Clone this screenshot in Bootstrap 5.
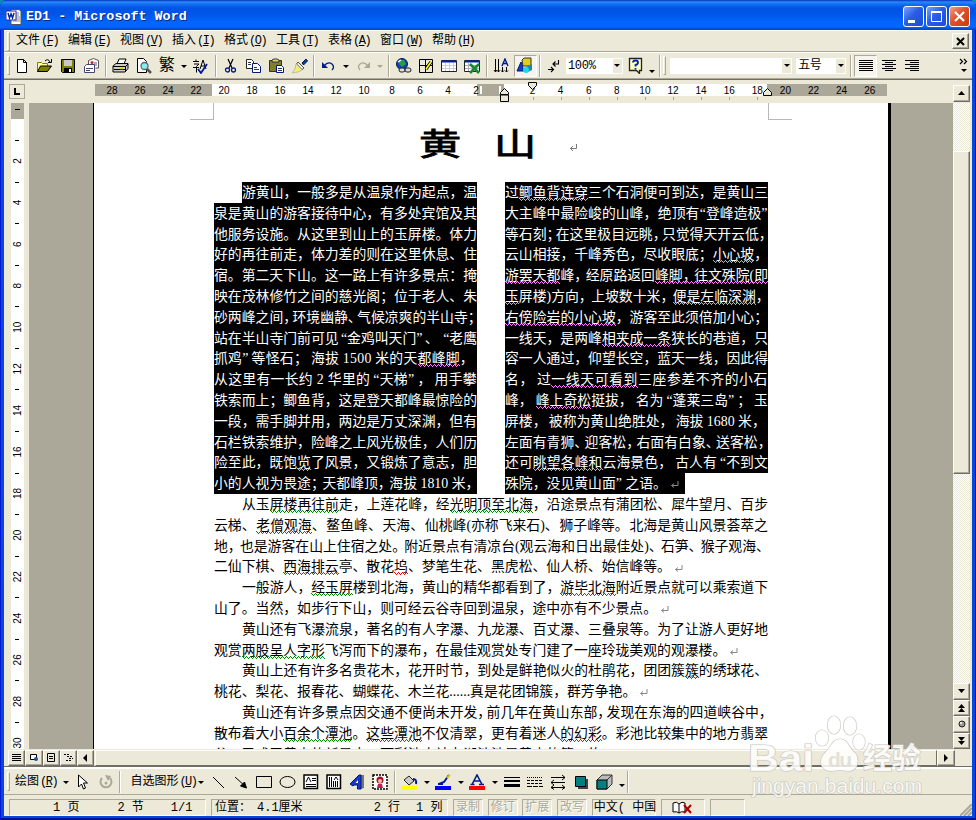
<!DOCTYPE html>
<html lang="zh-CN">
<head>
<meta charset="utf-8">
<meta name="viewport" content="width=device-width, initial-scale=1">
<title>ED1 - Microsoft Word</title>
<link href="https://cdn.jsdelivr.net/npm/bootstrap@5.3.0/dist/css/bootstrap.min.css" rel="stylesheet">
<style>
:root{--face:#ece9d8;--dark:#aca899}
html,body{width:976px;height:820px;overflow:hidden;margin:0}
body{font-family:"Liberation Mono","Noto Sans CJK SC",monospace;font-size:12px;line-height:1;color:#000;background:#0a8fb0}
svg{display:block;flex:none}
.win{width:976px;height:820px;border-radius:7px 7px 0 0;background:#0a46dc;padding:0 4px 4px 4px;box-shadow:inset 1px 0 #0019cf,inset -1px -2px #00138c}
.titlebar{height:30px;margin:0 -4px;padding:3px 6px 0 6px;border-radius:7px 7px 0 0;background:linear-gradient(#0831b8 0,#2a8afc 2px,#1470f4 4px,#0054e3 8px,#0055e8 14px,#0364fc 22px,#0066ff 27px,#003fc0 30px)}
.titlebar .cap{color:#fff;font-weight:700;font-size:13.4px;text-shadow:1px 1px #0a2a80;white-space:pre}
.cb{width:21px;height:21px;border:1px solid #fff;border-radius:3px;background:linear-gradient(135deg,#7ba4fa,#2a5ce8 45%,#1c4cd8)}
.cb.close-x{background:linear-gradient(135deg,#f0a088,#e0502a 45%,#c83a10)}
.client{height:786px;background:var(--face)}
.grip{width:3px;height:19px;border:1px solid;border-color:#fff var(--dark) var(--dark) #fff;flex:none}
.menubar{height:22px;border-top:1px solid #fff;border-bottom:1px solid var(--dark);padding:0 3px}
.menus{padding-left:6px}
.menubar .mi{width:52px;white-space:nowrap}
.mi u,.lbl u{text-underline-offset:1px}
.hk{letter-spacing:-1.5px;margin-left:1px}
.mi,.lbl{font-size:12px}
.lbl{white-space:nowrap;flex:none}
.lbl-a{width:50px;padding-left:5px}
.lbl-b{width:72px;padding-left:7px}
.bar{height:26px;border-top:1px solid #fff;padding-left:3px}
.ic{width:23.2px;flex:none;display:flex;align-items:center;justify-content:center}
.dd{width:11px;flex:none;display:flex;justify-content:center;padding-top:2px}
.dd::after,.cbo i::after{content:"";border:3px solid transparent;border-top:3px solid #000;border-bottom:0}
.dd.off::after{border-top-color:var(--dark)}
.vs{width:2px;height:22px;flex:none;background:linear-gradient(90deg,var(--dark) 50%,#fff 50%);margin:0 2px}
.pressed{height:22px;border:1px solid;border-color:var(--dark) #fff #fff var(--dark);background:#f6f4ec}
.cbo{height:16px;background:#fff;display:flex;align-items:center;justify-content:space-between;flex:none;font-size:12px;letter-spacing:-.3px;padding-left:2px}
.cbo i{width:9px;height:14px;margin-right:1px;background:var(--face);display:flex;align-items:center;justify-content:center}
.zoombox{width:57px}.fontbox{width:122px;margin-left:4px}.sizebox{width:50px;margin-left:4px}
.edge{border-top:1px solid var(--dark);border-bottom:1px solid #716f64}
.hrule{height:23px}
.rgap{height:5px}
.docrow{height:646px}
.desk{background:var(--dark)}
.desk-l{width:64px}.desk-r{width:62px}
.sheet-edge{width:3px;background:#000}
.sheet{width:795px;background:#fff;overflow:hidden;border-left:1px solid #000}
.crop-l,.crop-r{width:24px;height:17px;border:1px solid #b8b8b8;border-top:0}
.crop-l{margin-left:96px;border-left:0}.crop-r{margin-right:96px;border-right:0}
.headline{height:62px;padding:2px 0 0 325px;font:400 31px/40px "Noto Sans CJK SC",sans-serif;-webkit-text-stroke:.9px #000}
.headline span{display:block;width:42px;transform:scaleX(1.36);text-align:center;margin-right:33px}
.headline svg{margin-top:22px}
.copy{margin-left:120px;width:554px;font:13.85px/22.8px "Liberation Serif","Noto Sans CJK SC",serif;white-space:nowrap}
.pcol{width:263px}
.ln{height:20.8px;width:100%}
.ind{padding-left:28px}
.sel{background:#000;color:#fff}
.sel.first{margin-left:28px;width:235px}
.sel.lastsel{width:180px}
.ln u{text-decoration:none;padding-bottom:1px;background:0 100%/4px 3px repeat-x;background-image:url("data:image/svg+xml,%3Csvg xmlns='http://www.w3.org/2000/svg' width='4' height='3'%3E%3Cpath d='M0 0h1v1h-1zM1 1h1v1h-1zM2 2h1v1h-1zM3 1h1v1h-1z' fill='%23008800'/%3E%3C/svg%3E")}
.sel u{background-image:url("data:image/svg+xml,%3Csvg xmlns='http://www.w3.org/2000/svg' width='4' height='3'%3E%3Cpath d='M0 0h1v1h-1zM1 1h1v1h-1zM2 2h1v1h-1zM3 1h1v1h-1z' fill='%23ff80ff'/%3E%3C/svg%3E")}
.sel u.cy{background-image:url("data:image/svg+xml,%3Csvg xmlns='http://www.w3.org/2000/svg' width='4' height='3'%3E%3Cpath d='M0 0h1v1h-1zM1 1h1v1h-1zM2 2h1v1h-1zM3 1h1v1h-1z' fill='%2300ffff'/%3E%3C/svg%3E")}
.ln u.rd{background-image:url("data:image/svg+xml,%3Csvg xmlns='http://www.w3.org/2000/svg' width='4' height='3'%3E%3Cpath d='M0 0h1v1h-1zM1 1h1v1h-1zM2 2h1v1h-1zM3 1h1v1h-1z' fill='%23ff0000'/%3E%3C/svg%3E")}
.pm{display:inline-block;width:8px;height:7px;margin-left:4px}
.sb{width:17px;height:16.5px;flex:none;background:var(--face);border:1px solid;border-color:#fff #716f64 #716f64 #fff;box-shadow:inset -1px -1px var(--dark);display:flex;align-items:center;justify-content:center}
.track{width:17px;background:repeating-conic-gradient(#fff 0 25%,#ece9d8 0 50%) 0 0/2px 2px}
.thumb{height:323px;border:1px solid;border-color:#fff #716f64 #716f64 #fff;background:var(--face);box-shadow:inset -1px -1px var(--dark);margin-top:48px}
.hs{height:18px;border-bottom:1px solid #716f64}
.vb{width:17.3px;height:16px}
.hthumb{width:842px;height:16px;border:1px solid;border-color:#fff #716f64 #716f64 #fff;margin-left:1px}
.drawbar{height:28px;padding-left:3px;border-top:2px solid #fff;border-bottom:1px solid var(--dark)}
.status{height:21px;padding-left:5px;font-size:12px;white-space:pre}
.pn{height:17px;border:1px solid;border-color:var(--dark) #fff #fff var(--dark);flex:none;display:flex;align-items:center;margin-right:5px}
.pn.off{width:30px;color:var(--dark);text-shadow:1px 1px #fff;justify-content:center;margin-right:4.7px}
.p1{width:197px;padding-left:43px}.p2{width:237px;padding-left:3px}.p3{width:64px;padding-left:1px}.p4{width:44px}.p5{width:35px}
.g1{margin-left:38px}.g2{margin-left:27px}.g3{margin-left:6px}.g4{margin-left:71px}.g5{margin-left:16px}
.wm{position:absolute;left:748px;top:714px;width:180px;height:92px}
</style>
</head>
<body>
<div class="win position-relative">
 <div class="titlebar d-flex align-items-center">
  <svg width="16" height="16" class="me-1"><path d="M5 .5h8l2 2v13H5z" fill="#fff" stroke="#555"/><path d="M8 4h5M8 6h5M10 8h4M10 10h4M7 12h7" stroke="#888"/><rect y="2" width="10" height="9" fill="#fff" stroke="#1c2f9c"/><path d="M2 4l1.500 5L5 5l1.500 4L8 4" fill="none" stroke="#10209c" stroke-width="1.500"/></svg>
  <span class="cap">ED1 - Microsoft Word</span>
  <div class="ms-auto d-flex" style="gap:2px">
   <div class="cb"><svg width="19" height="19"><rect x="4" y="13" width="7" height="3" fill="#fff"/></svg></div>
   <div class="cb"><svg width="19" height="19"><path d="M4.500 4.500h10v10h-10z" fill="none" stroke="#fff"/><path d="M4 5h11" stroke="#fff" stroke-width="2"/></svg></div>
   <div class="cb close-x"><svg width="19" height="19"><path d="M5 5l9 9M14 5l-9 9" stroke="#fff" stroke-width="2.200"/></svg></div>
  </div>
 </div>
 <div class="client">
  <div class="menubar d-flex align-items-center">
   <span class="grip"></span><div class="menus d-flex">
   <span class="mi">文件<span class="hk">(<u>F</u>)</span></span><span class="mi">编辑<span class="hk">(<u>E</u>)</span></span><span class="mi">视图<span class="hk">(<u>V</u>)</span></span><span class="mi">插入<span class="hk">(<u>I</u>)</span></span><span class="mi">格式<span class="hk">(<u>O</u>)</span></span><span class="mi">工具<span class="hk">(<u>T</u>)</span></span><span class="mi">表格<span class="hk">(<u>A</u>)</span></span><span class="mi">窗口<span class="hk">(<u>W</u>)</span></span><span class="mi">帮助<span class="hk">(<u>H</u>)</span></span></div>
   <div class="sb vb ms-auto me-0"><svg width="9" height="9"><path d="M1 1l7 7M8 1l-7 7" stroke="#000" stroke-width="2"/></svg></div>
  </div>
  <div class="bar d-flex align-items-center">
   <span class="grip"></span>
   <span class="ic"><svg width="16" height="16"><path d="M3.500 1.500h6l3 3v10h-9zM9.500 1.500v3h3" fill="#fff" stroke="#000"/></svg></span>
   <span class="ic"><svg width="17" height="16"><path d="M1.500 13.500v-9h4l1 1h5v3" fill="#ffffa0" stroke="#808000"/><path d="M1.500 13.500l3-5.500h11l-4 5.500z" fill="#808000" stroke="#000"/><path d="M9 3q3-3 5 1M15.500 1v3.500H12" fill="none" stroke="#000"/></svg></span>
   <span class="ic"><svg width="16" height="16"><path d="M1.500 1.500h13v13h-12l-1-1z" fill="#808000" stroke="#000"/><rect x="4" y="2" width="8" height="6" fill="#c8c8c8"/><rect x="4" y="10" width="8" height="4.500" fill="#000"/><rect x="9" y="11" width="2" height="3" fill="#fff"/></svg></span>
   <span class="ic"><svg width="17" height="16"><path d="M5.500 7V2.500l5-2 5 2V10h-3" fill="#fff" stroke="#555"/><circle cx="9" cy="4.500" r="1.500" fill="#e02020"/><path d="M11 5h3M11 7h3" stroke="#55a"/><path d="M1.500 8.500l2-2h8v8h-10zM3 10.500h7M3 12.500h4" fill="#fff" stroke="#446"/></svg></span>
   <span class="vs"></span>
   <span class="ic"><svg width="17" height="16"><path d="M5 6l2-5h7l-2 5z" fill="#fff" stroke="#000"/><path d="M1 8l3-2.500h12v5L13 14H1z" fill="#ccc" stroke="#000"/><path d="M1 8.500h12.500L16 6M2 11.500h11M13.500 8v6" stroke="#000" fill="none"/><path d="M8 10.500h3" stroke="#dc0" stroke-width="1.500"/></svg></span>
   <span class="ic"><svg width="17" height="16"><path d="M2.500.5h6l3 3v11h-9z" fill="#fff" stroke="#000"/><circle cx="9.500" cy="8" r="3.500" fill="#8ee" stroke="#666" stroke-width="1.300"/><path d="M12 11l4 4" stroke="#555" stroke-width="2.500"/></svg></span>
   <span class="ic fs-6">繁</span><span class="dd"></span>
   <span class="ic"><svg width="18" height="16"><path d="M1 3.500h6M4 1.500v2M2 6h5L4.500 8.500v6M1 9.500h6M8 11l3-9 3 9M9 8h4" stroke="#000" fill="none"/><path d="M6 11l3 4 6-9" stroke="#0018a0" stroke-width="1.800" fill="none"/></svg></span>
   <span class="vs"></span>
   <span class="ic"><svg width="15" height="16"><path d="M5 1l4 9M10 1L6 10" stroke="#000" stroke-width="1.200"/><circle cx="4.500" cy="12" r="2" fill="none" stroke="#0a1a90" stroke-width="1.300"/><circle cx="10.500" cy="12" r="2" fill="none" stroke="#0a1a90" stroke-width="1.300"/></svg></span>
   <span class="ic"><svg width="17" height="16"><path d="M1.500 1.500h5l2 2v7h-7z" fill="#fff" stroke="#222"/><path d="M7.500 5.500h5l3 3v6h-8z" fill="#fff" stroke="#001a80"/><path d="M3 4.500h3M3 6.500h3M9 9.500h3M9 11.500h5" stroke="#335"/></svg></span>
   <span class="ic"><svg width="17" height="16"><path d="M1.500 2.500h12v11h-12z" fill="#807c30" stroke="#332"/><path d="M4 4h7V2L9 1H6L4 2z" fill="#dd6" stroke="#333"/><path d="M8.500 7.500h5l2 2v5h-7z" fill="#fff" stroke="#001a80"/><path d="M10 10.500h4M10 12.500h4" stroke="#335"/></svg></span>
   <span class="ic"><svg width="17" height="16"><path d="M11 5l4-4 1.500 2-4 4z" fill="#048" stroke="#001a70"/><path d="M7 4l6 6-2 1.500L5.500 6z" fill="#eee" stroke="#554"/><path d="M5 6l6 6-4 2-6 1 3-4z" fill="#f3f06a" stroke="#bba"/></svg></span>
   <span class="vs"></span>
   <span class="ic"><svg width="16" height="16"><path d="M3 8q4-5 8-2 3 3 0 6" fill="none" stroke="#001a90" stroke-width="1.300"/><path d="M1 4v6h6z" fill="#001a90"/></svg></span><span class="dd"></span>
   <span class="ic"><svg width="16" height="16"><path d="M13 8q-4-5-8-2-3 3 0 6" fill="none" stroke="#aca899" stroke-width="1.300"/><path d="M15 4v6H9z" fill="#aca899"/></svg></span><span class="dd off"></span>
   <span class="vs"></span>
   <span class="ic"><svg width="17" height="16"><circle cx="7" cy="6" r="5.500" fill="#1a3cc0" stroke="#024"/><path d="M4 2l5 0 2 4-4 3-3-3z" fill="#20a040"/><path d="M3 4l3-2" stroke="#fff" stroke-width="1.500"/><rect x="4" y="10" width="6" height="4" rx="2" fill="#ddd" stroke="#222"/><rect x="10" y="10" width="6" height="4" rx="2" fill="#ddd" stroke="#222"/></svg></span>
   <span class="ic"><svg width="16" height="16"><path d="M1.500 1.500h13v13h-13zM7.500 1.500v13M1.500 7.500h13" fill="none" stroke="#000"/><path d="M13 4l-5 7" stroke="#000" stroke-width="3.200"/><path d="M13 4l-5 7" stroke="#ff0" stroke-width="1.600"/></svg></span>
   <span class="ic"><svg width="17" height="16"><path d="M.5 2.500h15v11H.5z" fill="#fff" stroke="#222"/><path d="M1 3.500h14" stroke="#0020b0" stroke-width="2"/><path d="M4.500 5v8M8.500 5v8M12.500 5v8M1 7.500h14M1 10.500h14" stroke="#ccd"/></svg></span>
   <span class="ic"><svg width="17" height="16"><path d="M.5 2.500h15v11H.5z" fill="#fff" stroke="#222"/><path d="M1 3.500h14" stroke="#0020b0" stroke-width="2"/><path d="M4.500 5v8M1 7.500h14M1 10.500h14" stroke="#aab"/><path d="M6 6l9 9M15 6l-9 9" stroke="#178a30" stroke-width="2.600"/></svg></span>
   <span class="vs"></span>
   <span class="ic"><svg width="17" height="16"><path d="M2.500 1v13M5.500 1v13M9.500 9v5M13.500 9v5M1 12l1.500 2L4 12M4.500 12.500l1 1.500 1-1.500M8 12.500l1.500 1.500 1.500-1.500M12 12.500l1.500 1.500 1.500-1.500" stroke="#000" fill="none"/><path d="M9 8l3-7 3 7M10 5.500h4" stroke="#001a90" stroke-width="1.400" fill="none"/></svg></span>
   <span class="ic pressed"><svg width="18" height="18"><path d="M6 3l2-2h7v8h-8z" fill="#e0cc20" stroke="#333"/><path d="M1 14L5 5l3 9z" fill="#1040c0" stroke="#001a80"/><path d="M11 9l5-2v6l-4 2z" fill="#28a"/><circle cx="10" cy="13" r="3" fill="#1ed8e8"/></svg></span>
   <span class="vs"></span>
   <span class="ic"><svg width="16" height="16"><path d="M12.500 2v4H7M9.500 3.500L7 6l2.500 2.500M2 11.500h5M5 9l2.500 2.500L5 14" stroke="#000" stroke-width="1.100" fill="none"/></svg></span>
   <span class="cbo zoombox">100%<i></i></span>
   <span class="ic"><svg width="17" height="17" class="ms-1"><path d="M1.500 1.500h12v12h-2v3l-3-3h-7z" fill="#ffffc0" stroke="#222" stroke-width="1.300"/><path d="M5 5.500q0-2 2.500-2t2.500 2-2.500 2.500v1.500M7.500 11v1.500" stroke="#0020c0" stroke-width="1.800" fill="none"/></svg></span>
   <span class="dd pt-2 mt-1"></span><span class="vs"></span><span class="grip"></span>
   <span class="cbo fontbox"><span></span><i></i></span>
   <span class="cbo sizebox">五号<i></i></span>
   <span class="vs ms-1"></span>
   <span class="ic pressed"><svg width="16" height="14"><path d="M1 1.500h14M1 3.500h14M1 5.500h14M1 7.500h14M1 9.500h14M1 11.500h14" stroke="#000"/></svg></span>
   <span class="ic"><svg width="16" height="14"><path d="M1 1.500h14M4 3.500h8M1 5.500h14M4 7.500h8M1 9.500h14M4 11.500h8" stroke="#000"/></svg></span>
   <span class="ic"><svg width="16" height="14"><path d="M1 1.500h14M6 3.500h9M1 5.500h14M6 7.500h9M1 9.500h14M6 11.500h9" stroke="#000"/></svg></span>
   <svg class="ms-auto me-1" width="9" height="16"><path d="M1 1l2.500 2.500L1 6M5 1l2.500 2.500L5 6" fill="none" stroke="#000" stroke-width="1.200"/><path d="M2 11h6L5 14z"/></svg>
  </div>
  <div class="edge"></div>
  <div class="hrule d-flex">
   <svg id="hr" width="949" height="25" font-family="Liberation Sans, sans-serif" font-size="10" text-anchor="middle" shape-rendering="crispEdges"></svg>
   <div><div class="rgap"></div><div class="sb"><svg width="7" height="4"><path d="M0 4L3.500 0 7 4z"/></svg></div></div>
  </div>
  <div class="docrow d-flex">
   <svg id="vr" width="25" height="646" font-family="Liberation Sans, sans-serif" font-size="10" text-anchor="middle" shape-rendering="crispEdges"></svg>
   <div class="desk desk-l"></div>
   <div class="sheet">
    <div class="d-flex justify-content-between"><div class="crop-l"></div><div class="crop-r"></div></div>
    <div class="headline d-flex"><span>黄</span><span>山</span><svg width="9" height="9"><path d="M7.500 0v4.500H1M4 2l-2.500 2.500L4 7" stroke="#777" fill="none"/></svg></div>
    <div class="copy">
     <div class="d-flex justify-content-between">
      <div class="pcol">
<div class="ln sel first fit">游黄山，一般多是从温泉作为起点，温</div>
<div class="ln sel fit">泉是黄山的游客接待中心，有多处宾馆及其</div>
<div class="ln sel fit">他服务设施。从这里到山上的玉屏楼。体力</div>
<div class="ln sel fit">好的再往前走，体力差的则在这里休息、住</div>
<div class="ln sel fit">宿。第二天下山。这一路上有许多景点：掩</div>
<div class="ln sel fit">映在茂林修竹之间的慈光阁；位于老人、朱</div>
<div class="ln sel fit">砂两峰之间，环境幽静、气候凉爽的半山寺；</div>
<div class="ln sel fit">站在半山寺门前可见“金鸡叫天门”、“老鹰</div>
<div class="ln sel fit">抓鸡”等怪石；海拔 1500 米的天<u>都峰脚</u>，</div>
<div class="ln sel fit">从这里有一长约 2 华里的“天梯”，用手攀</div>
<div class="ln sel fit">铁索而上；鲫鱼背，这是登天都峰最惊险的</div>
<div class="ln sel fit">一段，需手脚并用，两边是万丈深渊，但有</div>
<div class="ln sel fit">石栏铁索维护，险峰之上风光极佳，人们历</div>
<div class="ln sel fit">险至此，既饱<u class="cy">览</u>了风景，又锻炼了意志，胆</div>
<div class="ln sel fit">小的人视为畏途；天都峰顶，海拔 1810 米，</div>
      </div>
      <div class="pcol">
<div class="ln sel fit">过<u>鲫鱼背连穿</u>三个石洞便可到达，是黄山三</div>
<div class="ln sel fit">大主峰中最险峻的山峰，绝顶有“登峰造极”</div>
<div class="ln sel fit">等石刻；在这里极目远眺，只觉得天开云低，</div>
<div class="ln sel fit">云山相接，千峰秀色，尽收眼底；<u>小心坡</u>，</div>
<div class="ln sel fit"><u>游罢天都</u>峰，经原路返回<u>峰脚，往文殊院(即</u></div>
<div class="ln sel fit"><u>玉</u>屏楼)方向，上坡数十米，<u>便是左临深渊</u>，</div>
<div class="ln sel fit"><u>右傍险岩的小心坡</u>，游客至此须倍加小心；</div>
<div class="ln sel fit">一线天，是两峰<u>相夹成一条</u>狭长的巷道，只</div>
<div class="ln sel fit">容一人通过，仰望长空，蓝天一线，因此得</div>
<div class="ln sel fit">名，过<u>一线天可看到</u>三座参差不齐的小石</div>
<div class="ln sel fit">峰，<u>峰上奇松</u>挺拔，名为“蓬莱三岛”；玉</div>
<div class="ln sel fit">屏楼，被称为黄山绝胜处，海拔 1680 米，</div>
<div class="ln sel fit">左面有青狮、迎客松，右面有白象、送客松，</div>
<div class="ln sel fit">还可<u>眺望各峰和</u>云海景色，古人有“不到文</div>
<div class="ln sel lastsel">殊院，没见黄山面” 之语。<svg class="pm"><path d="M7 0v4.500H1M3 2.500l-2.500 2L3 6.500" stroke="#888" fill="none"/></svg></div>
      </div>
     </div>
<div class="ln ind fit">从玉<u>屏楼再往前</u>走，上莲花峰，经<u>光明顶至北海</u>，沿途景点有蒲团松、犀牛望月、百步</div>
<div class="ln fit">云梯、<u>老僧观海</u>、鳌鱼峰、天海、仙桃峰(亦称飞来石)、狮子峰等。北海是黄山风景荟萃之</div>
<div class="ln fit">地，也是游客在山上住宿之处。附近景点有清凉台(观云海和日出最佳处)、石笋、猴子观海、</div>
<div class="ln">二仙下棋、<u>西海排云</u>亭、散花<u class="rd">坞</u>、梦笔生花、黑虎松、仙人桥、始信峰等。<svg class="pm"><path d="M7 0v4.500H1M3 2.500l-2.500 2L3 6.500" stroke="#888" fill="none"/></svg></div>
<div class="ln ind fit">一般游人，<u>经玉屏</u>楼到北海，黄山的精华都看到了，<u>游毕北海</u>附近景点就可以乘索道下</div>
<div class="ln">山了。当然，如步行下山，则可经云谷寺回到温泉，途中亦有不少景点。<svg class="pm"><path d="M7 0v4.500H1M3 2.500l-2.500 2L3 6.500" stroke="#888" fill="none"/></svg></div>
<div class="ln ind fit">黄山还有飞瀑流泉，著名的有人字瀑、九龙瀑、百丈瀑、三叠泉等。为了让游人更好地</div>
<div class="ln">观赏<u>两股呈人字形</u>飞泻而下的瀑布，在最佳观赏处专门建了一座玲珑美观的观瀑楼。<svg class="pm"><path d="M7 0v4.500H1M3 2.500l-2.500 2L3 6.500" stroke="#888" fill="none"/></svg></div>
<div class="ln ind fit">黄山上还有许多名贵花木，花开时节，到处是鲜艳似火的杜鹃花，团团簇<u class="rd">簇</u>的绣球花、</div>
<div class="ln">桃花、梨花、报春花、蝴蝶花、木兰花......真是花团锦簇，群芳争艳。<svg class="pm"><path d="M7 0v4.500H1M3 2.500l-2.500 2L3 6.500" stroke="#888" fill="none"/></svg></div>
<div class="ln ind fit">黄山还有许多景点因交通不便尚未开发，前几年在黄山东部，发现在东海的四道峡谷中，</div>
<div class="ln fit">散布着大小<u>百余个潭池</u>。<u>这些潭池</u>不仅清翠，更有着迷人<u>的幻彩</u>。彩池比较集中的地方翡翠</div>
<div class="ln">谷，已成了黄山的新景点。而彩池水神力湖池池是黄山的第五绝</div>
    </div>
   </div>
   <div class="sheet-edge"></div>
   <div class="desk desk-r"></div>
   <div class="track d-flex flex-column">
    <div class="thumb"></div>
    <div class="sb mt-auto"><svg width="7" height="4"><path d="M0 0h7L3.500 4z"/></svg></div>
    <div class="sb"><svg width="7" height="8"><path d="M0 4L3.500 0 7 4zM0 8l3.500-4L7 8z"/></svg></div>
    <div class="sb"><svg width="8" height="8"><circle cx="4" cy="4" r="3" fill="#999" stroke="#222"/><circle cx="3" cy="3" r="1" fill="#fff"/></svg></div>
    <div class="sb"><svg width="7" height="8"><path d="M0 0h7L3.500 4zM0 4h7L3.500 8z"/></svg></div>
   </div>
  </div>
  <div class="hs d-flex align-items-center ps-1">
   <div class="sb vb"><svg width="10" height="9"><path d="M0 1.500h9M0 3.500h9M0 5.500h9M0 7.500h9" stroke="#000"/></svg></div>
   <div class="sb vb"><svg width="10" height="9"><path d="M1.500 1.500h6v5h-6z" fill="#fff" stroke="#000"/><circle cx="7" cy="6" r="2" fill="#15a"/></svg></div>
   <div class="sb vb pressed"><svg width="10" height="9"><path d="M1.500 .5h7v8h-7zM3 3.500h4M3 5.500h4" fill="none" stroke="#000"/></svg></div>
   <div class="sb vb"><svg width="10" height="9"><path d="M0 1.500h5M3 3.500h6M5 5.500h4M2 7.500h5" stroke="#000" stroke-dasharray="2 1"/></svg></div>
   <div class="sb vb"><svg width="5" height="8"><path d="M4 0v8L0 4z"/></svg></div>
   <div class="hthumb"></div>
   <div class="sb vb"><svg width="5" height="8"><path d="M0 0v8l4-4z"/></svg></div>
  </div>
  <div class="drawbar d-flex align-items-center">
   <span class="grip"></span><span class="lbl lbl-a">绘图<span class="hk">(<u>R</u>)</span></span><span class="dd"></span>
   <span class="ic"><svg width="11" height="16"><path d="M1.500 1v12l3-3 2 5 2-1-2-5h4z" fill="#fff" stroke="#000"/></svg></span>
   <span class="ic"><svg width="16" height="16"><path d="M4 4a5.500 5.500 0 1 0 8 0" fill="none" stroke="#aca899" stroke-width="2"/><path d="M7 1l6 1-3 5z" fill="#aca899"/><circle cx="8" cy="9" r="1.500" fill="#aca899"/></svg></span>
   <span class="vs"></span><span class="lbl lbl-b">自选图形<span class="hk">(<u>U</u>)</span></span><span class="dd"></span>
   <span class="ic"><svg width="16" height="16"><path d="M3 3l11 11" stroke="#000"/></svg></span>
   <span class="ic"><svg width="16" height="16"><path d="M2 3l10 9M13.500 14l-2-6-4 4z" stroke="#000"/></svg></span>
   <span class="ic"><svg width="16" height="16"><path d="M.5 2.500h15v11H.5z" fill="none" stroke="#000"/></svg></span>
   <span class="ic"><svg width="17" height="16"><ellipse cx="8.500" cy="8" rx="7.500" ry="5.500" fill="none" stroke="#000"/></svg></span>
   <span class="ic"><svg width="16" height="16"><path d="M1 1h13.500v13.500H1z" fill="#fff" stroke="#000" stroke-width="1.500"/><path d="M3 8l2.500-5L8 8M9 4.500h4M9 6.500h4M3 10.500h10M3 12.500h10" stroke="#000" fill="none"/></svg></span>
   <span class="ic"><svg width="16" height="16"><path d="M1 1h13.500v13.500H1z" fill="#fff" stroke="#000" stroke-width="1.500"/><path d="M3.500 3v10M5.500 3v10M7.500 7v6M9.500 7v6M11.500 7v6M8 6l2-3 2 3" stroke="#000" fill="none"/></svg></span>
   <span class="ic"><svg width="17" height="16"><path d="M12 1l3-0v13l-3 1z" fill="#777"/><path d="M1 10L10 1h2v14H8.500v-4H5l-1 1z" fill="#1836c8" stroke="#001a70"/><path d="M6.500 9L9 6v3z" fill="#fff"/></svg></span>
   <span class="ic"><svg width="16" height="16"><path d="M1 1h14v14H1z" fill="#fff" stroke="#000" stroke-width="1.500" stroke-dasharray="2 1"/><circle cx="8" cy="6" r="3.500" fill="#a01030"/><circle cx="8" cy="7" r="2" fill="#f0c090"/><path d="M5 14l1-4h4l1 4z" fill="#c02050"/></svg></span>
   <span class="vs"></span>
   <span class="ic"><svg width="17" height="16"><path d="M3 6l5-4 5 5-5 4z" fill="#ccc" stroke="#222"/><path d="M12 5q4 0 3 5" stroke="#001a90" stroke-width="2" fill="none"/><path d="M0 12h16v4H0z" fill="#ff0"/></svg></span><span class="dd"></span>
   <span class="ic"><svg width="17" height="16"><path d="M4 10l5-2 5-7M3 10h5" stroke="#001a90" stroke-width="2" fill="none"/><path d="M12 4l3-3" stroke="#dc0" stroke-width="2"/><path d="M0 12h16v4H0z" fill="#00f"/></svg></span><span class="dd"></span>
   <span class="ic"><svg width="17" height="16"><path d="M3 10.500L8 1l5 9.500M5 7h6M1.500 10.500h4M10 10.500h5" stroke="#001a90" stroke-width="1.600" fill="none"/><path d="M0 12h16v4H0z" fill="red"/></svg></span><span class="dd"></span>
   <span class="ic"><svg width="16" height="16"><path d="M0 3.500h16" stroke="#000"/><path d="M0 7h16" stroke="#000" stroke-width="2"/><path d="M0 11.500h16" stroke="#000" stroke-width="3"/></svg></span>
   <span class="ic"><svg width="16" height="16"><path d="M0 3.500h16" stroke="#000" stroke-dasharray="1 1"/><path d="M0 6.500h16M0 9.500h16" stroke="#000" stroke-dasharray="3 1"/><path d="M0 12.500h16" stroke="#000" stroke-dasharray="5 1"/></svg></span>
   <span class="ic"><svg width="16" height="16"><path d="M1 3.500h14M1 8.500h14M1 13.500h14M12 1l3 2.500L12 6M4 6L1 8.500 4 11M12 11l3 2.500-3 2M4 11l-3 2.500 3 2" stroke="#000" fill="none"/></svg></span>
   <span class="ic"><svg width="16" height="16"><path d="M4 5h10v10H4z" fill="#444"/><path d="M1.500 2.500h10v10h-10z" fill="#008080" stroke="#000"/></svg></span>
   <span class="ic"><svg width="17" height="16"><path d="M1 6l5-5h10v9l-5 5H1z" fill="#bbb" stroke="#333"/><path d="M1 6h10v9H1z" fill="#008080" stroke="#000"/><path d="M11 6l5-5" stroke="#333"/></svg></span>
   <span class="dd pt-2"></span><span class="vs m-0"></span>
  </div>
  <div class="status d-flex align-items-end">
   <div class="pn p1"><span>1 页</span><span class="g1">2 节</span><span class="g2">1/1</span></div>
   <div class="pn p2"><span>位置：</span><span class="g3">4.1厘米</span><span class="g4">2 行</span><span class="g5">1 列</span></div>
   <div class="pn off">录制</div><div class="pn off">修订</div><div class="pn off">扩展</div><div class="pn off">改写</div>
   <div class="pn p3"><span>中文( 中国</span></div>
   <div class="pn p4 justify-content-center"><svg width="22" height="14"><path d="M1 2q4-2 6 1 3-3 6-1v9q-4-1-6 1-2-2-6-1zM7 3v9" fill="#fff" stroke="#000"/><path d="M12 4l7 8M19 4l-7 8" stroke="#b00000" stroke-width="2"/></svg></div>
   <div class="pn p5"></div>
   <svg class="ms-auto" width="12" height="12"><path d="M0 12L12 0M4 12l8-8M8 12l4-4" stroke="#aca899" stroke-width="2"/></svg>
  </div>
 </div>
 <svg class="wm" viewBox="0 0 180 92" font-family="Liberation Sans, Noto Sans CJK SC, sans-serif" fill="#fff" fill-opacity=".85" stroke="#c9c7be" stroke-width="1.200" paint-order="stroke">
  <text x="0" y="57" font-size="37" font-weight="700" textLength="66" lengthAdjust="spacingAndGlyphs">Bai</text>
  <ellipse cx="74" cy="24" rx="6.500" ry="8"/><ellipse cx="86" cy="11" rx="6.500" ry="9"/><ellipse cx="102" cy="12" rx="6.500" ry="9"/><ellipse cx="111" cy="28" rx="6" ry="8"/>
  <path d="M92 25c8 0 9 9 15 14 5 5 3 19-7 18-5-1-11-1-16 0-11 1-14-11-8-17 6-5 8-15 16-15z"/>
  <text x="80" y="53" font-size="21" font-weight="700" fill="#dedcd2" stroke="none" textLength="24">du</text>
  <text x="115" y="55" font-size="29" font-weight="700" textLength="58" lengthAdjust="spacingAndGlyphs">经验</text>
  <text x="4" y="79" font-size="20" textLength="170" lengthAdjust="spacingAndGlyphs">jingyan.baidu.com</text>
 </svg>
</div>
<script src="https://cdn.jsdelivr.net/npm/bootstrap@5.3.0/dist/js/bootstrap.bundle.min.js"></script>
<script>
// Horizontal ruler: x coordinates are window pixels minus the 4px frame.
(function(){
 let s='<path d="M5 4h15v14H5z" fill="#ece9d8" stroke="#aca899"/><path d="M10.500 8v6h5" fill="none" stroke="#000" stroke-width="2"/>';
 const r=(a,b,c)=>s+=`<rect x="${a-4}" y="4" width="${b-a}" height="12" fill="${c}"/>`;
 r(95,212,'#aca899');r(212,477,'#fff');r(477,504,'#aca899');r(504,767,'#fff');r(767,887,'#aca899');
 const t=(x,n)=>s+=`<text x="${x-4}" y="13.500">${n}</text>`;
 for(let n=28,x=112;n>=2;n-=2,x+=28)t(x,n);
 for(let n=2,x=532.500;n<=26;n+=2,x+=28.100){t(x,n);if(n<=18)s+=`<rect x="${Math.round(x)-4}" y="17" width="1" height="3" fill="#aca899"/>`}
 s+='<path d="M477 6v8M496 6v8" stroke="#fff" stroke-width="2"/>';
 s+='<g shape-rendering="auto" fill="#ece9d8" stroke="#000"><path d="M496.500 14.500v-2l4-4 4 4v2zM496.500 15h8v6.500h-8zM524.500 2.500h8v3l-4 4-4-4zM759.500 15.500v-3l4-4 4 4v3z"/></g>';
 document.getElementById('hr').innerHTML=s;
 let v='<rect width="25" height="646" fill="#ece9d8"/><rect x="7" width="13" height="16" fill="#aca899"/><rect x="7" y="16" width="13" height="630" fill="#fff"/><rect x="11" y="6" width="5" height="1"/>';
 for(let n=2,y=58;n<=30;n+=2,y+=41.570)v+=`<text transform="translate(16.500 ${y}) rotate(-90)">${n}</text><rect x="11" y="${Math.round(y-21)}" width="4" height="1"/>`;
 document.getElementById('vr').innerHTML=v;
})();
// Justification: punctuation takes up to 3px of slack each, the rest is spread over all characters.
document.querySelectorAll('.fit').forEach(l=>{
 const w=document.createTreeWalker(l,NodeFilter.SHOW_TEXT),ns=[];
 while(w.nextNode())ns.push(w.currentNode);
 ns.forEach(n=>{
  const f=document.createDocumentFragment();
  n.data.split(/([，。、；：“”])/).forEach(p=>{
   if(/^[，。、；：“”]$/.test(p)){const e=document.createElement('span');e.className='pu';e.textContent=p;f.append(e)}else if(p)f.append(p)});
  n.replaceWith(f)});
 const g=document.createRange();g.selectNodeContents(l);
 const cs=getComputedStyle(l),room=l.clientWidth-parseFloat(cs.paddingLeft)-g.getBoundingClientRect().width;
 const ps=l.querySelectorAll('.pu'),per=Math.min(room/ps.length,3);
 ps.forEach(e=>{e.style[e.textContent==='“'?'marginLeft':'marginRight']=per+'px'});
 l.style.letterSpacing=(room-per*ps.length)/l.textContent.length+'px';
});
</script>
</body>
</html>
